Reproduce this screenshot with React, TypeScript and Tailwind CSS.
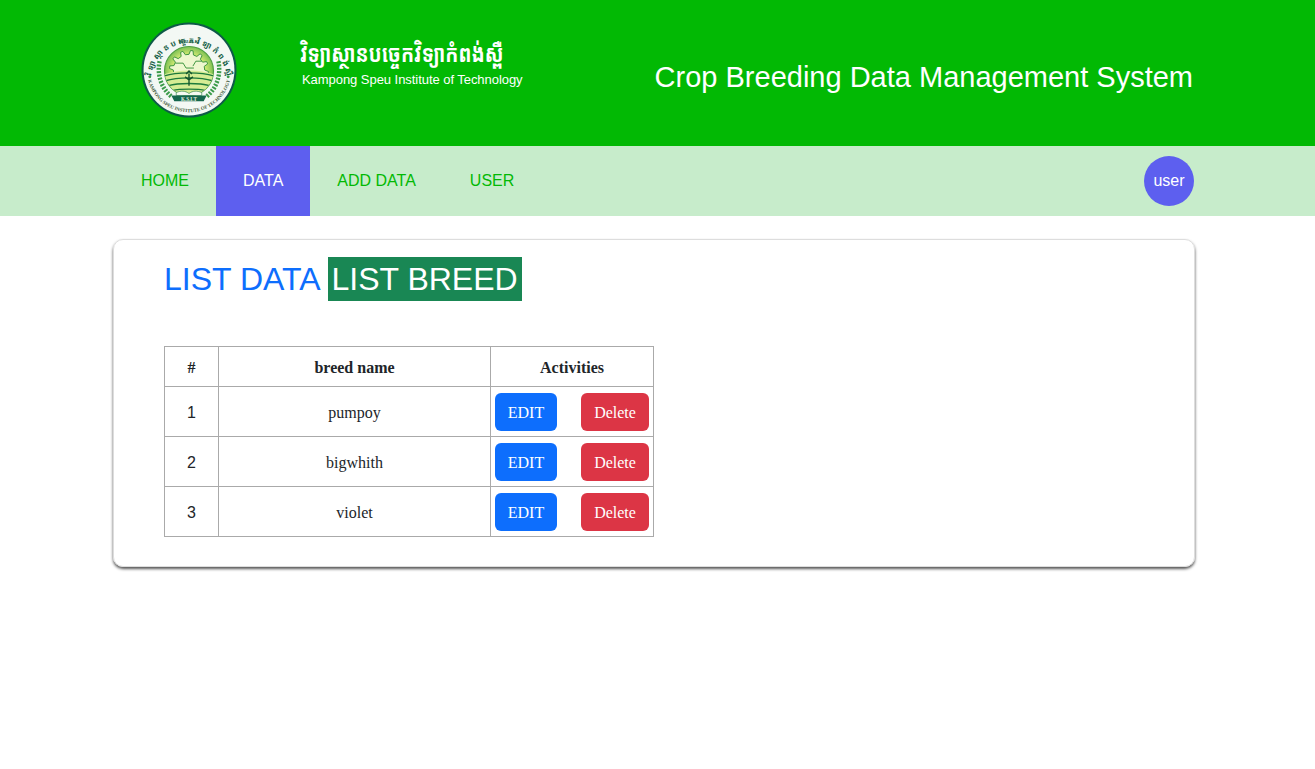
const rows = [
  { id: 1, name: 'pumpoy' },
  { id: 2, name: 'bigwhith' },
  { id: 3, name: 'violet' },
]

const sans = { fontFamily: '"Liberation Sans", Arial, sans-serif' }
const khmer = '"Noto Sans Khmer", "Khmer OS", "Noto Sans", sans-serif'

// gear outline for the logo
function gearPath(cx: number, cy: number, outer: number, inner: number, teeth: number) {
  const pts: string[] = []
  const step = (Math.PI * 2) / teeth
  for (let i = 0; i < teeth; i++) {
    const a = i * step
    const at = (r: number, t: number) =>
      `${(cx + r * Math.cos(a + t)).toFixed(2)} ${(cy + r * Math.sin(a + t)).toFixed(2)}`
    pts.push(at(inner, 0), at(outer, step * 0.15), at(outer, step * 0.4), at(inner, step * 0.55))
  }
  return `M${pts.join('L')}Z`
}

function Logo() {
  return (
    <svg width="96" height="96" viewBox="0 0 98 98" className="shrink-0">
      <defs>
        <path id="seal-top" d="M 10.4 55 A 39 39 0 0 1 87.6 55" />
        <path id="seal-bottom" d="M 6.4 55 A 43 43 0 0 0 91.6 55" />
        <radialGradient id="seal-fill" cx="50%" cy="50%" r="55%">
          <stop offset="0%" stopColor="#fbfbd4" />
          <stop offset="65%" stopColor="#c6e46e" />
          <stop offset="100%" stopColor="#63b34a" />
        </radialGradient>
        <clipPath id="seal-clip">
          <circle cx="49" cy="50" r="25" />
        </clipPath>
      </defs>
      <circle cx="49" cy="49" r="48.5" fill="#0e5a48" />
      <circle cx="49" cy="49" r="46.4" fill="#f3f8f4" />

      {/* wreath */}
      <path d="M19 40c-3 14 2 28 12 36M79 40c3 14-2 28-12 36" fill="none" stroke="#3b9b4a" strokeWidth="4.5" strokeDasharray="2 1.4" />
      <circle cx="9" cy="56" r="1.5" fill="#3b9b4a" />
      <circle cx="89" cy="56" r="1.5" fill="#3b9b4a" />

      {/* disc */}
      <circle cx="49" cy="50" r="25" fill="url(#seal-fill)" stroke="#4f9f40" strokeWidth="1.2" />
      <g clipPath="url(#seal-clip)">
        <path d={gearPath(49, 49, 20, 16, 12)} fill="#eef7cf" stroke="#3c9440" strokeWidth="1" />
        <path d="M22 54c14-6 40-6 54 0v24H22z" fill="#d6ec94" />
        <path d="M24 55c12-4 38-4 50 0M25 60c12-4 36-4 48 0M28 65c10-3 32-3 42 0M32 70c8-2 26-2 34 0" fill="none" stroke="#1d7a3c" strokeWidth="1.4" />
        <path d="M35 42h8l3 5h8M62 40h-6l-3 5" fill="none" stroke="#3c9440" strokeWidth="1" />
        <path d="M49 53v12M45 56l4 3 4-3M46 53l3-3 3 3" fill="none" stroke="#14532d" strokeWidth="1.4" />
      </g>

      {/* book and banner */}
      <path d="M36 72c5-2 9-2 13 1 4-3 8-3 13-1v3H36z" fill="#f7fbf2" stroke="#1d7a3c" strokeWidth="0.6" />
      <path d="M31 75h36l-3 6H34z" fill="#14664c" />
      <text x="49" y="80.2" textAnchor="middle" fontSize="5.2" fill="#e8f5e0" fontFamily="Liberation Serif, serif" fontWeight="700">K.S.I.T</text>

      {/* ring lettering */}
      <text fontSize="8" fontWeight="700" fill="#155e46" fontFamily={khmer}>
        <textPath href="#seal-top" startOffset="50%" textAnchor="middle" textLength="112">វិទ្យាស្ថានបច្ចេកវិទ្យាកំពង់ស្ពឺ</textPath>
      </text>
      <text x="49" y="21.5" textAnchor="middle" fontSize="5" fontWeight="700" fill="#155e46" fontFamily={khmer}>ស.ប.ត.ស</text>
      <text fontSize="5" fontWeight="700" fill="#3f5b3a" fontFamily="Liberation Serif, serif">
        <textPath href="#seal-bottom" startOffset="50%" textAnchor="middle">KAMPONG SPEU INSTITUTE OF TECHNOLOGY</textPath>
      </text>
    </svg>
  )
}

function ActionButton({ label, color, width }: { label: string; color: string; width: string }) {
  return (
    <button className={`${color} ${width} h-[38px] pt-[2px] rounded-md text-white text-base`}>{label}</button>
  )
}

export default function App() {
  return (
    <div className="min-h-[769px] bg-white" style={{ fontFamily: '"Liberation Serif", "Times New Roman", serif' }}>
      {/* Header */}
      <header className="h-[146px] bg-[#02b904] pl-[141px] pr-[122px] flex items-start text-white" style={sans}>
        <div className="mt-[22px]">
          <Logo />
        </div>
        <div className="ml-[63px] mt-[36px]">
          <div className="text-[24px] leading-[34px] font-bold whitespace-nowrap origin-left scale-x-[0.804]" style={{ fontFamily: khmer }}>
            វិទ្យាស្ថានបច្ចេកវិទ្យាកំពង់ស្ពឺ
          </div>
          <div className="ml-[2px] mt-px text-[13px] tracking-[-0.05px] leading-[18px] whitespace-nowrap">Kampong Speu Institute of Technology</div>
        </div>
        <div className="ml-auto mt-[60px] text-[29px] leading-[34px] whitespace-nowrap">Crop Breeding Data Management System</div>
      </header>

      {/* Nav */}
      <nav className="h-[70px] bg-[#c7eccb] pl-[114px] pr-[121px] flex items-center text-base text-[#02b904]" style={sans}>
        <a className="h-full px-[27px] flex items-center">HOME</a>
        <a className="h-full px-[27px] flex items-center bg-[#5d5fef] text-white">DATA</a>
        <a className="h-full px-[27px] flex items-center">ADD DATA</a>
        <a className="h-full px-[27px] flex items-center">USER</a>
        <div className="ml-auto w-[50px] h-[50px] rounded-full bg-[#5d5fef] text-white flex items-center justify-center">user</div>
      </nav>

      {/* Card */}
      <main className="ml-[113px] mt-[23px] w-[1082px] h-[328px] rounded-[10px] border border-[#dddddd] shadow-[0_2px_3px_#555555] pl-[50px] pt-[17px]">
        <div className="flex items-center text-[32px] leading-[44px]" style={sans}>
          <span className="text-[#0d6efd]">LIST DATA</span>
          <span className="ml-[8px] pl-[3px] pr-[4px] bg-[#198754] text-white">LIST BREED</span>
        </div>
        <table className="mt-[45px] w-[490px] border-collapse text-base text-[#212529]">
          <thead>
            <tr className="h-[40px]">
              <th className="w-[54px] pt-[2px] border border-[#aaaaaa]">#</th>
              <th className="w-[272px] pt-[2px] border border-[#aaaaaa]">breed name</th>
              <th className="pt-[2px] border border-[#aaaaaa]">Activities</th>
            </tr>
          </thead>
          <tbody>
            {rows.map((r) => (
              <tr key={r.id} className="h-[50px]">
                <td className="pt-[2px] border border-[#aaaaaa] text-center" style={sans}>{r.id}</td>
                <td className="pt-[2px] border border-[#aaaaaa] text-center">{r.name}</td>
                <td className="border border-[#aaaaaa] px-[4px]">
                  <div className="flex justify-between">
                    <ActionButton label="EDIT" color="bg-[#0d6efd]" width="w-[62px]" />
                    <ActionButton label="Delete" color="bg-[#dc3545]" width="w-[68px]" />
                  </div>
                </td>
              </tr>
            ))}
          </tbody>
        </table>
      </main>
    </div>
  )
}
